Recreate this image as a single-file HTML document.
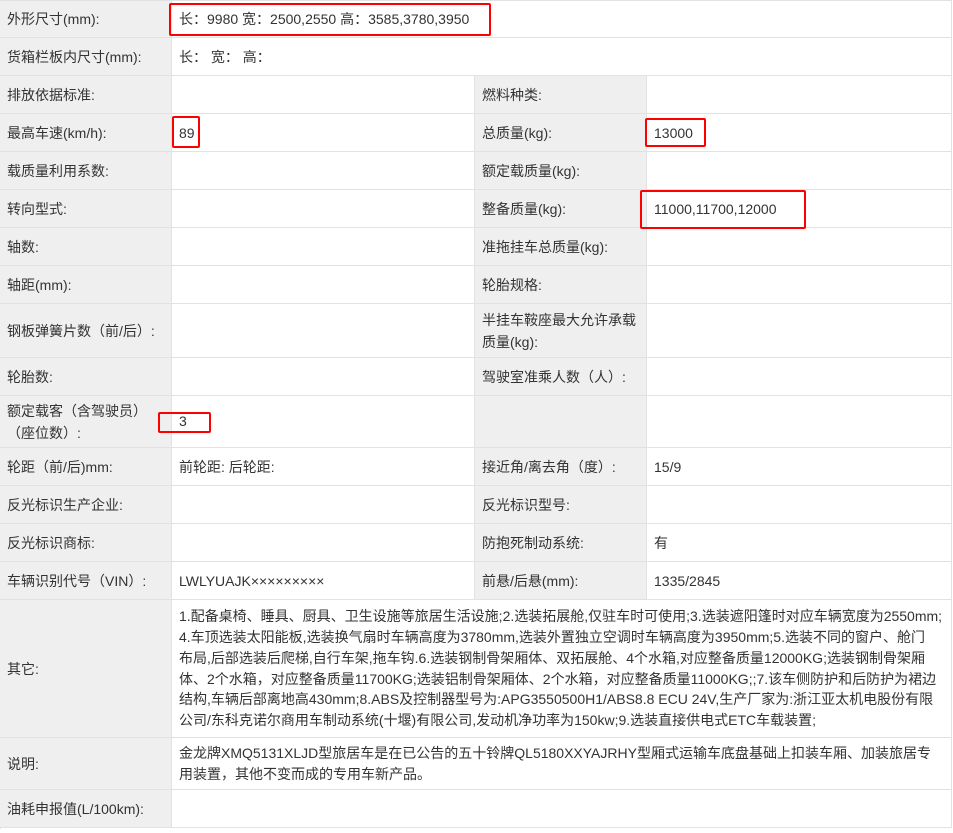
<!DOCTYPE html>
<html><head><meta charset="utf-8"><style>
body{margin:0;width:953px;height:833px;background:#fff;position:relative;font-family:"Liberation Sans","Noto Sans CJK SC",sans-serif;font-size:14px;color:#333;overflow:hidden}
.c{position:absolute;box-sizing:border-box;border-right:1px solid #e2e2e2;border-bottom:1px solid #e2e2e2;display:flex;align-items:center;padding-left:7px;line-height:18px;white-space:nowrap}
.l{background:#efefef}
.r{position:absolute;border:2px solid #f00;border-radius:2px;box-sizing:border-box}
</style></head><body>
<div style="position:absolute;left:0;top:0;width:952px;height:1px;background:#e2e2e2"></div>
<div style="position:absolute;left:0;top:0;width:1px;height:829px;background:#e2e2e2"></div>
<div class="c l" style="left:0;top:1px;width:172px;height:37px">外形尺寸(mm):</div>
<div class="c" style="left:172px;top:1px;width:780px;height:37px">长：9980 宽：2500,2550 高：3585,3780,3950</div>
<div class="c l" style="left:0;top:38px;width:172px;height:38px">货箱栏板内尺寸(mm):</div>
<div class="c" style="left:172px;top:38px;width:780px;height:38px">长：&nbsp;宽：&nbsp;高：</div>

<div class="c l" style="left:0;top:76px;width:172px;height:38px">排放依据标准:</div>
<div class="c" style="left:172px;top:76px;width:303px;height:38px"></div>
<div class="c l" style="left:475px;top:76px;width:172px;height:38px">燃料种类:</div>
<div class="c" style="left:647px;top:76px;width:305px;height:38px"></div>

<div class="c l" style="left:0;top:114px;width:172px;height:38px">最高车速(km/h):</div>
<div class="c" style="left:172px;top:114px;width:303px;height:38px">89</div>
<div class="c l" style="left:475px;top:114px;width:172px;height:38px">总质量(kg):</div>
<div class="c" style="left:647px;top:114px;width:305px;height:38px">13000</div>

<div class="c l" style="left:0;top:152px;width:172px;height:38px">载质量利用系数:</div>
<div class="c" style="left:172px;top:152px;width:303px;height:38px"></div>
<div class="c l" style="left:475px;top:152px;width:172px;height:38px">额定载质量(kg):</div>
<div class="c" style="left:647px;top:152px;width:305px;height:38px"></div>

<div class="c l" style="left:0;top:190px;width:172px;height:38px">转向型式:</div>
<div class="c" style="left:172px;top:190px;width:303px;height:38px"></div>
<div class="c l" style="left:475px;top:190px;width:172px;height:38px">整备质量(kg):</div>
<div class="c" style="left:647px;top:190px;width:305px;height:38px">11000,11700,12000</div>

<div class="c l" style="left:0;top:228px;width:172px;height:38px">轴数:</div>
<div class="c" style="left:172px;top:228px;width:303px;height:38px"></div>
<div class="c l" style="left:475px;top:228px;width:172px;height:38px">准拖挂车总质量(kg):</div>
<div class="c" style="left:647px;top:228px;width:305px;height:38px"></div>

<div class="c l" style="left:0;top:266px;width:172px;height:38px">轴距(mm):</div>
<div class="c" style="left:172px;top:266px;width:303px;height:38px"></div>
<div class="c l" style="left:475px;top:266px;width:172px;height:38px">轮胎规格:</div>
<div class="c" style="left:647px;top:266px;width:305px;height:38px"></div>

<div class="c l" style="left:0;top:304px;width:172px;height:54px">钢板弹簧片数（前/后）:</div>
<div class="c" style="left:172px;top:304px;width:303px;height:54px"></div>
<div class="c l" style="left:475px;top:304px;width:172px;height:54px;line-height:22px">半挂车鞍座最大允许承载<br>质量(kg):</div>
<div class="c" style="left:647px;top:304px;width:305px;height:54px"></div>

<div class="c l" style="left:0;top:358px;width:172px;height:38px">轮胎数:</div>
<div class="c" style="left:172px;top:358px;width:303px;height:38px"></div>
<div class="c l" style="left:475px;top:358px;width:172px;height:38px">驾驶室准乘人数（人）:</div>
<div class="c" style="left:647px;top:358px;width:305px;height:38px"></div>

<div class="c l" style="left:0;top:396px;width:172px;height:52px;line-height:22px">额定载客（含驾驶员）<br>（座位数）:</div>
<div class="c" style="left:172px;top:396px;width:303px;height:52px;align-items:flex-start;padding-top:16px">3</div>
<div class="c l" style="left:475px;top:396px;width:172px;height:52px"></div>
<div class="c" style="left:647px;top:396px;width:305px;height:52px"></div>

<div class="c l" style="left:0;top:448px;width:172px;height:38px">轮距（前/后)mm:</div>
<div class="c" style="left:172px;top:448px;width:303px;height:38px">前轮距: 后轮距:</div>
<div class="c l" style="left:475px;top:448px;width:172px;height:38px">接近角/离去角（度）:</div>
<div class="c" style="left:647px;top:448px;width:305px;height:38px">15/9</div>

<div class="c l" style="left:0;top:486px;width:172px;height:38px">反光标识生产企业:</div>
<div class="c" style="left:172px;top:486px;width:303px;height:38px"></div>
<div class="c l" style="left:475px;top:486px;width:172px;height:38px">反光标识型号:</div>
<div class="c" style="left:647px;top:486px;width:305px;height:38px"></div>

<div class="c l" style="left:0;top:524px;width:172px;height:38px">反光标识商标:</div>
<div class="c" style="left:172px;top:524px;width:303px;height:38px"></div>
<div class="c l" style="left:475px;top:524px;width:172px;height:38px">防抱死制动系统:</div>
<div class="c" style="left:647px;top:524px;width:305px;height:38px">有</div>

<div class="c l" style="left:0;top:562px;width:172px;height:38px">车辆识别代号（VIN）:</div>
<div class="c" style="left:172px;top:562px;width:303px;height:38px">LWLYUAJK×××××××××</div>
<div class="c l" style="left:475px;top:562px;width:172px;height:38px">前悬/后悬(mm):</div>
<div class="c" style="left:647px;top:562px;width:305px;height:38px">1335/2845</div>

<div class="c l" style="left:0;top:600px;width:172px;height:138px">其它:</div>
<div class="c" style="left:172px;top:600px;width:780px;height:138px;line-height:20.8px;overflow:hidden">1.配备桌椅、睡具、厨具、卫生设施等旅居生活设施;2.选装拓展舱,仅驻车时可使用;3.选装遮阳篷时对应车辆宽度为2550mm;<br>4.车顶选装太阳能板,选装换气扇时车辆高度为3780mm,选装外置独立空调时车辆高度为3950mm;5.选装不同的窗户、舱门<br>布局,后部选装后爬梯,自行车架,拖车钩.6.选装钢制骨架厢体、双拓展舱、4个水箱,对应整备质量12000KG;选装钢制骨架厢<br>体、2个水箱，对应整备质量11700KG;选装铝制骨架厢体、2个水箱，对应整备质量11000KG;;7.该车侧防护和后防护为裙边<br>结构,车辆后部离地高430mm;8.ABS及控制器型号为:APG3550500H1/ABS8.8 ECU 24V,生产厂家为:浙江亚太机电股份有限<br>公司/东科克诺尔商用车制动系统(十堰)有限公司,发动机净功率为150kw;9.选装直接供电式ETC车载装置;</div>

<div class="c l" style="left:0;top:738px;width:172px;height:52px">说明:</div>
<div class="c" style="left:172px;top:738px;width:780px;height:52px;line-height:21px;overflow:hidden">金龙牌XMQ5131XLJD型旅居车是在已公告的五十铃牌QL5180XXYAJRHY型厢式运输车底盘基础上扣装车厢、加装旅居专<br>用装置，其他不变而成的专用车新产品。</div>

<div class="c l" style="left:0;top:790px;width:172px;height:38px">油耗申报值(L/100km):</div>
<div class="c" style="left:172px;top:790px;width:780px;height:38px"></div>

<div class="r" style="left:169px;top:3px;width:322px;height:33px"></div>
<div class="r" style="left:172px;top:116px;width:28px;height:32px"></div>
<div class="r" style="left:645px;top:118px;width:61px;height:29px"></div>
<div class="r" style="left:640px;top:190px;width:166px;height:39px"></div>
<div class="r" style="left:158px;top:412px;width:53px;height:21px"></div>
</body></html>
